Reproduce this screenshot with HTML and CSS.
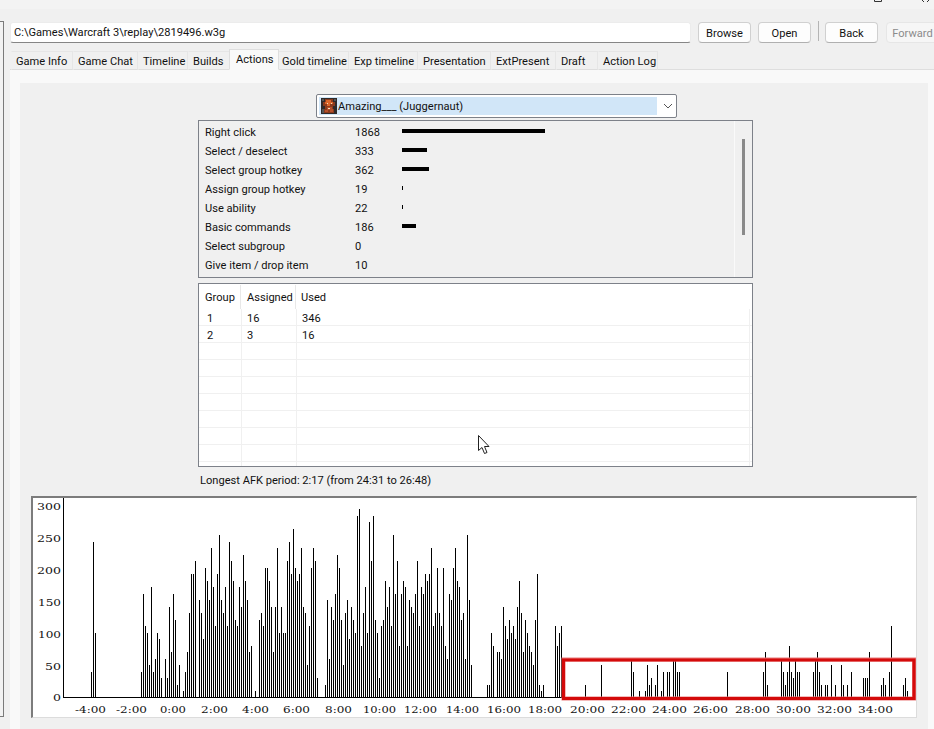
FILE: index.html
```html
<!DOCTYPE html>
<html lang="en">
<head>
<meta charset="utf-8">
<title>Replay Parser - Actions</title>
<link rel="stylesheet" href="styles.css">
</head>
<body>
<div class="titlebar">
  <svg class="winctl" width="74" height="3" viewBox="0 0 74 3"><path d="M14.5 0V1.5H21.5V0M62 0L64 2M69 0L67 2" fill="none" stroke="#333"/></svg>
</div>
<div class="shell">
  <div class="sidepane"></div>
  <main class="main">
    <div class="toolbar">
      <div class="field">C:\Games\Warcraft 3\replay\2819496.w3g</div>
      <button class="btn">Browse</button>
      <button class="btn">Open</button>
      <span class="sep"></span>
      <button class="btn">Back</button>
      <button class="btn btn-off">Forward</button>
    </div>
    <nav class="tabs">
      <span class="tab">Game Info</span>
      <span class="tab">Game Chat</span>
      <span class="tab">Timeline</span>
      <span class="tab">Builds</span>
      <span class="tab tab-on">Actions</span>
      <span class="tab">Gold timeline</span>
      <span class="tab">Exp timeline</span>
      <span class="tab">Presentation</span>
      <span class="tab">ExtPresent</span>
      <span class="tab">Draft</span>
      <span class="tab">Action Log</span>
    </nav>
    <div class="page">
      <section class="panel">
        <div class="combo">
          <div class="combo-sel">
            <svg class="hero" width="16" height="16" viewBox="0 0 16 16" shape-rendering="crispEdges">
              <rect width="16" height="16" fill="#2e2a2a"/>
              <path d="M4 1h8v3h2v4h-2v3h1v4H3v-4h1V8H2V4h2z" fill="#8a3a1c"/>
              <path d="M5 2h5v2h2v2H9v2H6V6H4V4h1z" fill="#d9652a"/>
              <path d="M6 9h5v2h1v3H9v-2H7v2H4v-2h2z" fill="#b5502a"/>
              <path d="M6 5h1v1H6zM10 5h1v1h-1zM7 10h2v1H7z" fill="#f2e0c0"/>
              <path d="M1 11h2v4H1zM13 1h2v2h-2zM1 1h2v2H1z" fill="#555"/>
            </svg>
            <span class="combo-text">Amazing___ (Juggernaut)</span>
          </div>
          <svg class="chev" width="10" height="6" viewBox="0 0 10 6"><path d="M1 1l4 4 4-4" fill="none" stroke="#555"/></svg>
        </div>

        <div class="stats">
          <div class="stat-rows">
            <div class="stat"><span class="s-name">Right click</span><span class="s-val">1868</span><i class="s-bar w143"></i></div>
            <div class="stat"><span class="s-name">Select / deselect</span><span class="s-val">333</span><i class="s-bar w25"></i></div>
            <div class="stat"><span class="s-name">Select group hotkey</span><span class="s-val">362</span><i class="s-bar w27"></i></div>
            <div class="stat"><span class="s-name">Assign group hotkey</span><span class="s-val">19</span><i class="s-bar w1"></i></div>
            <div class="stat"><span class="s-name">Use ability</span><span class="s-val">22</span><i class="s-bar w1"></i></div>
            <div class="stat"><span class="s-name">Basic commands</span><span class="s-val">186</span><i class="s-bar w14"></i></div>
            <div class="stat"><span class="s-name">Select subgroup</span><span class="s-val">0</span></div>
            <div class="stat"><span class="s-name">Give item / drop item</span><span class="s-val">10</span></div>
          </div>
          <div class="gutter"><div class="thumb"></div></div>
        </div>

        <div class="groups">
          <div class="g-head">
            <span class="gh gh1">Group</span>
            <span class="gh gh2">Assigned</span>
            <span class="gh gh3">Used</span>
          </div>
          <div class="g-row"><span class="gc gc1">1</span><span class="gc gc2">16</span><span class="gc gc3">346</span></div>
          <div class="g-row"><span class="gc gc1">2</span><span class="gc gc2">3</span><span class="gc gc3">16</span></div>
          <div class="g-row"><span class="gc gc1"></span><span class="gc gc2"></span><span class="gc gc3"></span></div>
          <div class="g-row"><span class="gc gc1"></span><span class="gc gc2"></span><span class="gc gc3"></span></div>
          <div class="g-row"><span class="gc gc1"></span><span class="gc gc2"></span><span class="gc gc3"></span></div>
          <div class="g-row"><span class="gc gc1"></span><span class="gc gc2"></span><span class="gc gc3"></span></div>
          <div class="g-row"><span class="gc gc1"></span><span class="gc gc2"></span><span class="gc gc3"></span></div>
          <div class="g-row"><span class="gc gc1"></span><span class="gc gc2"></span><span class="gc gc3"></span></div>
          <div class="g-row"><span class="gc gc1"></span><span class="gc gc2"></span><span class="gc gc3"></span></div>
          <div class="g-row"><span class="gc gc1"></span><span class="gc gc2"></span><span class="gc gc3"></span></div>
          <svg class="cursor" width="13" height="21" viewBox="0 0 13 21"><path d="M1.5 1.5V16.5L5 13.5L7.5 19.5L10 18.5L7.5 12.5H12Z" fill="#fff" stroke="#222" stroke-linejoin="round"/></svg>
        </div>

        <p class="afk">Longest AFK period: 2:17 (from 24:31 to 26:48)</p>

        <div class="chart">
          <svg id="chart" class="chart-svg" width="883" height="219" viewBox="33 498 883 219">
            <g class="y-labels">
              <text x="37" y="510" textLength="24" lengthAdjust="spacingAndGlyphs">300</text>
              <text x="37" y="542" textLength="24" lengthAdjust="spacingAndGlyphs">250</text>
              <text x="37" y="574" textLength="24" lengthAdjust="spacingAndGlyphs">200</text>
              <text x="38" y="606" textLength="23" lengthAdjust="spacingAndGlyphs">150</text>
              <text x="38" y="638" textLength="23" lengthAdjust="spacingAndGlyphs">100</text>
              <text x="45" y="670" textLength="16" lengthAdjust="spacingAndGlyphs">50</text>
              <text x="53" y="701" textLength="8" lengthAdjust="spacingAndGlyphs">0</text>
            </g>
            <g class="x-labels">
              <text x="75" y="713" textLength="31" lengthAdjust="spacingAndGlyphs">-4:00</text>
              <text x="116" y="713" textLength="31" lengthAdjust="spacingAndGlyphs">-2:00</text>
              <text x="160" y="713" textLength="26" lengthAdjust="spacingAndGlyphs">0:00</text>
              <text x="201" y="713" textLength="27" lengthAdjust="spacingAndGlyphs">2:00</text>
              <text x="242" y="713" textLength="27" lengthAdjust="spacingAndGlyphs">4:00</text>
              <text x="283" y="713" textLength="27" lengthAdjust="spacingAndGlyphs">6:00</text>
              <text x="325" y="713" textLength="27" lengthAdjust="spacingAndGlyphs">8:00</text>
              <text x="363" y="713" textLength="33" lengthAdjust="spacingAndGlyphs">10:00</text>
              <text x="404" y="713" textLength="33" lengthAdjust="spacingAndGlyphs">12:00</text>
              <text x="446" y="713" textLength="33" lengthAdjust="spacingAndGlyphs">14:00</text>
              <text x="487" y="713" textLength="34" lengthAdjust="spacingAndGlyphs">16:00</text>
              <text x="528" y="713" textLength="34" lengthAdjust="spacingAndGlyphs">18:00</text>
              <text x="570" y="713" textLength="35" lengthAdjust="spacingAndGlyphs">20:00</text>
              <text x="611" y="713" textLength="35" lengthAdjust="spacingAndGlyphs">22:00</text>
              <text x="652" y="713" textLength="35" lengthAdjust="spacingAndGlyphs">24:00</text>
              <text x="693" y="713" textLength="35" lengthAdjust="spacingAndGlyphs">26:00</text>
              <text x="735" y="713" textLength="35" lengthAdjust="spacingAndGlyphs">28:00</text>
              <text x="776" y="713" textLength="35" lengthAdjust="spacingAndGlyphs">30:00</text>
              <text x="817" y="713" textLength="35" lengthAdjust="spacingAndGlyphs">32:00</text>
              <text x="858" y="713" textLength="35" lengthAdjust="spacingAndGlyphs">34:00</text>
            </g>
            <path id="bars" class="bars" d=""/>
            <path class="axes" d="M63.5 498V697.5H916"/>
            <rect class="mark-edge" x="563.5" y="659.5" width="350.5" height="39"/>
            <rect class="mark" x="563.5" y="660" width="350.5" height="38.5"/>
          </svg>
        </div>
      </section>
    </div>
  </main>
</div>
<script src="chart.js"></script>
</body>
</html>
```

FILE: styles.css
```css
* { box-sizing: border-box; }
html, body { margin: 0; padding: 0; }
body {
  width: 934px;
  height: 729px;
  overflow: hidden;
  background: #f0f0f0;
  color: #111;
  font: 11.1px/16px Roboto, "Open Sans", sans-serif;
}
.titlebar {
  height: 9px;
  background: #f3f3f3;
  display: flex;
  justify-content: flex-end;
}
.winctl { display: block; }
.shell { display: flex; height: 720px; }
.sidepane {
  width: 4px;
  height: 696px;
  margin-top: 12px;
  flex: none;
  background: #f2f2f2;
  border: 1px solid #7a7a7a;
  border-left: 0;
}
.main { width: 924px; margin-left: 6px; flex: none; display: flex; flex-direction: column; }

.toolbar { display: flex; align-items: flex-start; margin-top: 13px; height: 21px; flex: none; }
.field {
  width: 681px;
  height: 21px;
  flex: none;
  padding: 0 3px;
  line-height: 19px;
  background: #fff;
  border-radius: 3px;
  border: 1px solid #ececec;
  border-bottom-color: #868686;
}
.btn {
  width: 53px;
  height: 21px;
  flex: none;
  margin-left: 7px;
  padding: 2px 0 0;
  font: inherit;
  color: #111;
  background: #fdfdfd;
  border: 1px solid #d0d0d0;
  border-bottom-color: #b0b0b0;
  border-radius: 4px;
}
.btn-off { margin-left: 8px; color: #8b8b8b; background: #f6f6f6; border-color: #e6e6e6; }
.sep { width: 1px; height: 20px; margin: -1px -1px 0 7px; background: #b4b4b4; flex: none; }

.tabs {
  display: grid;
  grid-template-columns: 62px 65px 50px 43px 46px 72px 69px 73px 65px 42px 60px;
  align-items: end;
  height: 21px;
  margin-top: 6px;
  padding-left: 1px;
  flex: none;
  border-bottom: 1px solid #dedede;
}
.tab {
  height: 19px;
  margin-bottom: -1px;
  padding: 0 0 0 4px;
  line-height: 19px;
  background: #f0f0f0;
  border: 1px solid #e6e6e6;
  border-bottom: 1px solid #dedede;
  border-left-color: transparent;
  white-space: nowrap;
}
.tab-on {
  position: relative;
  z-index: 1;
  height: 21px;
  margin: 0 -2px -1px;
  padding: 1px 0 0 6px;
  line-height: 17px;
  background: #f9f9f9;
  border-color: #dedede;
  border-bottom-color: #f9f9f9;
}

.page { flex: 1; background: #f9f9f9; padding: 13px 6px 0 10px; }
.panel { height: 100%; background: #f0f0f0; padding: 11px 0 0 178px; position: relative; }

.combo {
  width: 361px;
  height: 24px;
  margin-left: 118px;
  padding: 2px;
  display: flex;
  align-items: center;
  background: #fff;
  border: 1px solid #7d8189;
  border-radius: 2px;
}
.combo-sel {
  width: 338px;
  height: 18px;
  display: flex;
  align-items: center;
  gap: 1px;
  padding-left: 2px;
  background: #d1e6f8;
}
.combo-text { padding-top: 2px; }
.hero { display: block; flex: none; }
.chev { margin-left: 6px; }

.stats {
  width: 555px;
  height: 158px;
  margin-top: 2px;
  display: flex;
  border: 1px solid #7d8189;
}
.stat-rows { flex: 1; padding: 1px 0 0 6px; }
.stat { height: 19px; display: flex; align-items: flex-start; padding-top: 2px; line-height: 17px; }
.s-name { width: 150px; flex: none; }
.s-val { width: 47px; flex: none; }
.s-bar { display: block; height: 4px; margin-top: 5px; background: #000; }
.w143 { width: 143px; }
.w25 { width: 25px; }
.w27 { width: 27px; }
.w14 { width: 14px; }
.w1 { width: 1px; }
.gutter { width: 18px; flex: none; padding: 18px 0 0 7px; border-left: 1px solid #fafafa; }
.thumb { width: 3px; height: 96px; background: #8a8a8a; }

.groups {
  width: 555px;
  height: 184px;
  margin-top: 5px;
  position: relative;
  overflow: hidden;
  background: #fff;
  border: 1px solid #7d8189;
}
.g-head { height: 25px; display: flex; padding-top: 1px; }
.gh { height: 24px; padding-left: 6px; line-height: 25px; border-right: 1px solid #e8e8e8; }
.gh1 { width: 42px; }
.gh2 { width: 55px; padding-left: 6px; }
.gh3 { border: 0; padding-left: 5px; }
.g-row { height: 17px; display: flex; border-bottom: 1px solid #f0f0f0; }
.gc { height: 16px; line-height: 20px; padding-left: 8px; border-right: 1px solid #f0f0f0; }
.gc1 { width: 43px; }
.gc2 { width: 55px; padding-left: 5px; }
.gc3 { flex: 1; padding-left: 5px; margin-right: 2px; }
.cursor { position: absolute; left: 278px; top: 150px; }

.afk { margin: 5px 0 8px 2px; height: 16px; line-height: 18px; }

.chart {
  width: 886px;
  height: 222px;
  margin-left: -167px;
  background: #fff;
  border: 1px solid #dcdcdc;
  border-top: 2px solid #7c7c7c;
  border-left: 2px solid #7c7c7c;
}
.chart-svg { display: block; }
.y-labels text, .x-labels text { font: 10px "DejaVu Serif", serif; fill: #111; }
.bars { stroke: #000; stroke-width: 1; fill: none; shape-rendering: crispEdges; }
.axes { stroke: #000; stroke-width: 1; fill: none; shape-rendering: crispEdges; }
.mark-edge { fill: none; stroke: #ea7a7a; stroke-width: 4; }
.mark { fill: none; stroke: #d40a0a; stroke-width: 3; }
```

FILE: chart.js
```js
// Action counts per time slice; each series starts at a pixel x and steps 2px.
var series = [
  [91, [40,240,100]],
  [141, [40,160,110,100,50,170,40,60,100,90,30,0,60,30,140,70,160,120,20,50,0,10,40,70,130,190,190,210,0,150,130,90,200,180,150,230,170,110,190,250,150,130,170,110,240,210,180,120,110,170,140,220,180,150,70,80,0,10,0,120,130,110,200,200,180,140,70,140,230,100,140,100,100,210,240,190,260,200,180,190,230,140,130,50,110,200,230,210,30]],
  [325, [20,150,60,140,120,160,220,200,120,50,130,150,90,140,120,100,280,290,80,130,170,100,270,210,280,120,100,30,110,120,180,140,170,110,250,160,210,80,160,180,170,80,150,140,130,160,210,110,170,160,190,180,190,230,110,130,200,130,110,200,80,60,160,150,200,230,180,170,120,130,60,250,150,50]],
  [487, [20,20,100,80,0,70,70,60,140,110,90,120,100,110,90,140,180,130,70,120,100,80,70,50,120,190,20,10,20]],
  [555, [110,80,100,110]],
  [585, [20]],
  [601, [50]],
  [631, [60,40,0,0,10,0,0,10,50,20,30,0,20,50,0,10,40,0,40,40,0,60,60,40,40]],
  [727, [40]],
  [763, [40,70,20]],
  [781, [60,40,20,40,80,40,30,60,40,40]],
  [813, [40,60,70,40,20,0,20,20,0,50,0,20,0,0,50,20,0,20,0,40]],
  [863, [30,30,30,70]],
  [881, [20,30,20,0,40,110]],
  [903, [20,30,10]]
];
var d = "";
series.forEach(function (s) {
  s[1].forEach(function (v, i) {
    if (!v) return;
    var x = s[0] + i * 2 + 0.5;
    var h = Math.round(v * 0.65 - 1);
    d += "M" + x + " 697V" + (697 - h);
  });
});
document.getElementById("bars").setAttribute("d", d);
```
